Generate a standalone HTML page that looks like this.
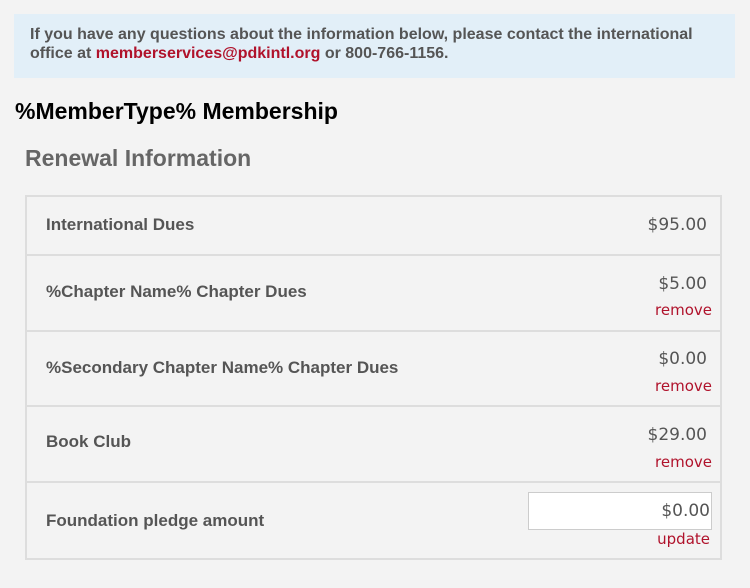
<!DOCTYPE html>
<html><head><style>
body{margin:0;width:750px;height:588px;background:#f3f3f3;font-family:"Liberation Sans",Arial,sans-serif;position:relative;overflow:hidden}
.info{position:absolute;left:14px;top:14px;width:721px;height:64px;background:#e2eff8;box-sizing:border-box;padding:11px 30px 10px 16px;color:#555;font-weight:bold;font-size:16px;line-height:19px}
.info a{color:#b0122b;text-decoration:none}
h1{position:absolute;left:15px;top:98px;margin:0;font-size:23px;color:#000}
h2{position:absolute;left:25px;top:145px;margin:0;font-size:23px;color:#666}
.t{position:absolute;left:25px;top:195px;width:697px;height:365px;border:2px solid #ddd;box-sizing:border-box}
.r{position:absolute;left:0;width:693px;border-bottom:2px solid #ddd;box-sizing:border-box}
.l{position:absolute;left:19px;font-weight:bold;font-size:17px;color:#555}
.a{position:absolute;right:13px;font-family:"DejaVu Sans",sans-serif;font-size:17px;color:#555;text-align:right}
.x{position:absolute;right:8px;font-family:"DejaVu Sans",sans-serif;font-size:15px;color:#b0122b}
.in{position:absolute;left:501px;top:9px;width:184px;height:38px;background:#fff;border:1px solid #ccc;box-sizing:border-box}
</style></head><body>
<div class="info">If you have any questions about the information below, please contact the international office at <a>memberservices@pdkintl.org</a> or 800-766-1156.</div>
<h1>%MemberType% Membership</h1>
<h2>Renewal Information</h2>
<div class="t">
<div class="r" style="top:0;height:59px"><div class="l" style="top:18px">International Dues</div><div class="a" style="top:18px">$95.00</div></div>
<div class="r" style="top:59px;height:76px"><div class="l" style="top:26px">%Chapter Name% Chapter Dues</div><div class="a" style="top:18px">$5.00</div><div class="x" style="top:45px">remove</div></div>
<div class="r" style="top:135px;height:75px"><div class="l" style="top:26px">%Secondary Chapter Name% Chapter Dues</div><div class="a" style="top:17px">$0.00</div><div class="x" style="top:45px">remove</div></div>
<div class="r" style="top:210px;height:76px"><div class="l" style="top:25px">Book Club</div><div class="a" style="top:18px">$29.00</div><div class="x" style="top:46px">remove</div></div>
<div class="r" style="top:286px;height:75px;border-bottom:none"><div class="in"></div><div class="l" style="top:28px">Foundation pledge amount</div><div class="a" style="top:18px;right:10px">$0.00</div><div class="x" style="top:47px;right:10px">update</div></div>
</div>
</body></html>
